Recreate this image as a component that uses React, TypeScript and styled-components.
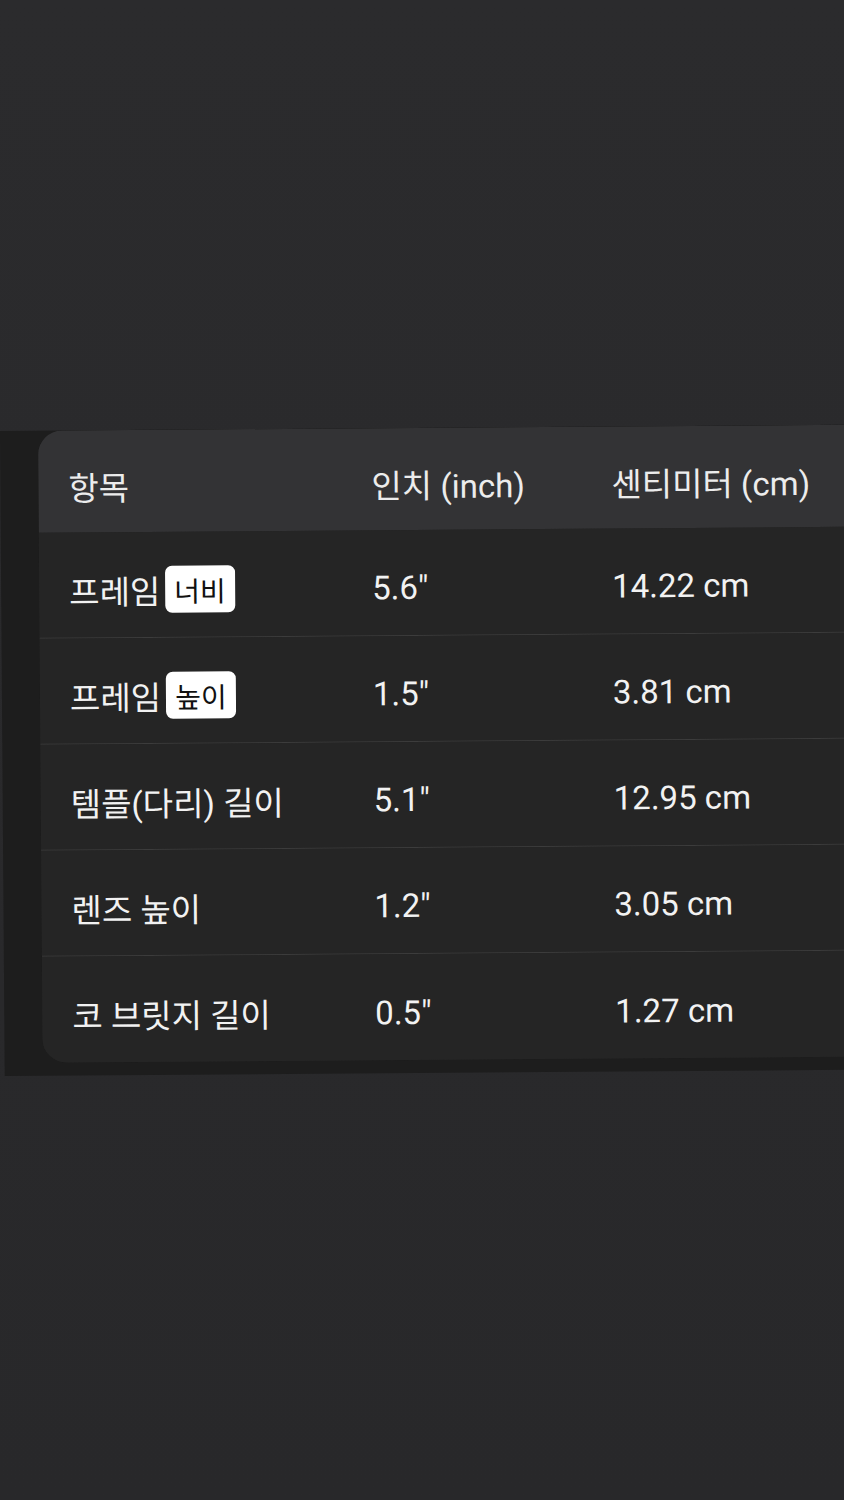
import React from "react";
import styled, { createGlobalStyle } from "styled-components";

const GlobalStyle = createGlobalStyle`
  html, body {
    margin: 0;
    padding: 0;
    background: linear-gradient(#2b2b2d, #28282a);
    overflow-x: hidden;
  }
  body {
    width: 844px;
    min-height: 1500px;
    font-family: Roboto, "Noto Sans CJK KR", sans-serif;
  }
`;

const Page = styled.div`
  width: 844px;
  height: 1500px;
  padding-top: 431px;
  box-sizing: border-box;
  overflow: hidden;
`;

const Backdrop = styled.div`
  width: 900px;
  padding: 0 0 13px 38px;
  background: #1d1d1d;
  transform: rotate(-0.42deg);
  transform-origin: left top;
`;

const Card = styled.div`
  background: #252525;
  border-radius: 24px 0 0 24px;
  overflow: hidden;
`;

const Row = styled.div<{ $head?: boolean }>`
  display: grid;
  grid-template-columns: 303px 240px 1fr;
  align-items: center;
  box-sizing: border-box;
  height: ${(p) => (p.$head ? "102px" : "106px")};
  padding: 10px 0 0 30px;
  background: ${(p) => (p.$head ? "#333335" : "#252525")};
  border-bottom: 1px solid ${(p) => (p.$head ? "transparent" : "#3c3c3c")};
  &:last-child {
    border-bottom: none;
  }
`;

const Cell = styled.div<{ $head?: boolean }>`
  display: flex;
  align-items: center;
  gap: 5px;
  font-size: 33px;
  color: ${(p) => (p.$head ? "#ececec" : "#f2f2f2")};
  white-space: nowrap;
`;

const Badge = styled.span`
  display: inline-flex;
  align-items: center;
  height: 47px;
  padding: 0 9px;
  border-radius: 7px;
  background: #ffffff;
  color: #111111;
  font-size: 28px;
`;

type Item = { label: string; badge?: string; inch: string; cm: string };

const rows: Item[] = [
  { label: "프레임", badge: "너비", inch: '5.6"', cm: "14.22 cm" },
  { label: "프레임", badge: "높이", inch: '1.5"', cm: "3.81 cm" },
  { label: "템플(다리) 길이", inch: '5.1"', cm: "12.95 cm" },
  { label: "렌즈 높이", inch: '1.2"', cm: "3.05 cm" },
  { label: "코 브릿지 길이", inch: '0.5"', cm: "1.27 cm" },
];

export default function App() {
  return (
    <Page>
      <GlobalStyle />
      <Backdrop>
        <Card>
          <Row $head>
            <Cell $head>항목</Cell>
            <Cell $head>인치 (inch)</Cell>
            <Cell $head>센티미터 (cm)</Cell>
          </Row>
          {rows.map((r, i) => (
            <Row key={i}>
              <Cell>
                {r.label}
                {r.badge && <Badge>{r.badge}</Badge>}
              </Cell>
              <Cell>{r.inch}</Cell>
              <Cell>{r.cm}</Cell>
            </Row>
          ))}
        </Card>
      </Backdrop>
    </Page>
  );
}
